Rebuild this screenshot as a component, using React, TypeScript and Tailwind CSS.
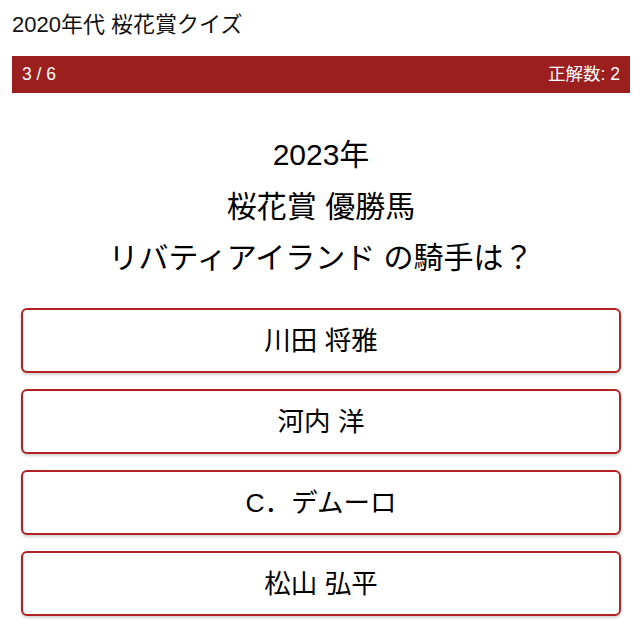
const choices = ['川田 将雅', '河内 洋', 'C．デムーロ', '松山 弘平'];

const font = { fontFamily: '"Liberation Sans", "Noto Sans CJK JP", sans-serif' };

export default function App() {
  return (
    <div className="min-h-[640px] bg-white text-black" style={font}>
      <div className="ml-3 mr-[10px]">
        <h1 className="pt-[12px] text-[22px] leading-[26px] text-[#111]">2020年代 桜花賞クイズ</h1>

        {/* progress bar */}
        <div className="mt-[18px] flex h-[37px] items-center justify-between bg-[#9b1f1f] px-[10px] text-[17.5px] text-white">
          <span>3 / 6</span>
          <span>正解数: 2</span>
        </div>

        {/* question */}
        <div className="mt-[36px] text-center text-[30px] leading-[51.5px]">
          <p>2023年</p>
          <p>桜花賞 優勝馬</p>
          <p>リバティアイランド の騎手は？</p>
        </div>

        {/* choices */}
        <div className="mx-[9px] mt-[24px] flex flex-col gap-4">
          {choices.map((c) => (
            <button
              key={c}
              className="h-[65px] w-full rounded-[6px] border-2 border-[#b22222] bg-white pt-[4px] text-[26.5px] text-black shadow-[0_2px_3px_rgba(0,0,0,0.18)]"
              style={font}
            >
              {c}
            </button>
          ))}
        </div>
      </div>
    </div>
  );
}
